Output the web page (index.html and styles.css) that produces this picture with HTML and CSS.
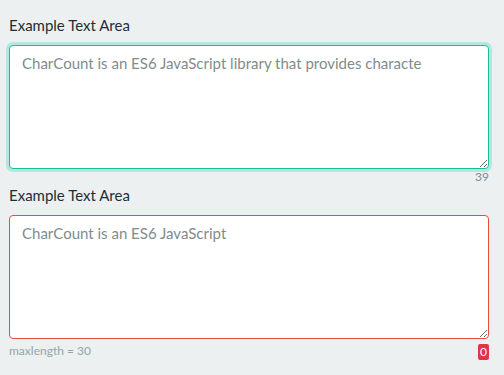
FILE: index.html
```html
<!DOCTYPE html>
<html>
<head>
    <link rel="stylesheet" href="styles.css">
</head>
<body>
    <!-- first field: still has room -->
    <div class="field">
        <label class="field-label" for="area1">Example Text Area</label>
        <textarea id="area1" class="text-area is-valid">CharCount is an ES6 JavaScript library that provides characte</textarea>
        <div class="field-foot">
            <span></span>
            <span class="count">39</span>
        </div>
    </div>

    <!-- second field: limit reached -->
    <div class="field">
        <label class="field-label" for="area2">Example Text Area</label>
        <textarea id="area2" class="text-area is-full" maxlength="30">CharCount is an ES6 JavaScript</textarea>
        <div class="field-foot foot-gap">
            <span class="hint">maxlength = 30</span>
            <span class="badge">0</span>
        </div>
    </div>
</body>
</html>
```

FILE: styles.css
```css
body {
    font-family: Lato, "Noto Sans", sans-serif;
    background-color: #ecf0f1;
    color: #222d38;
    margin: 0;
    padding: 15px 15px 0 9px;
}

.field {
    width: 480px;
}

.field-label {
    display: block;
    font-size: 15px;
    line-height: 21px;
    margin-bottom: 9px;
}

.text-area {
    display: block;
    box-sizing: border-box;
    width: 100%;
    height: 124px;
    margin: 0;
    padding: 8px 12px;
    font-family: Lato, "Noto Sans", sans-serif;
    font-size: 15px;
    line-height: 1.2;
    color: #7f8c8d;
    background: #fff;
    border: 1px solid #ccc;
    border-radius: 4px;
    outline: none;
}

/* focused field with room left */
.is-valid {
    border-color: #1abc9c;
    box-shadow: 0 0 0 3px #b3e8dc;
}

/* field at its limit */
.is-full {
    border-color: #e74c3c;
}

.field-foot {
    display: flex;
    justify-content: space-between;
    align-items: center;
    font-size: 12px;
    line-height: 16px;
}

.foot-gap {
    margin-top: 3px;
}

.count {
    color: #7f8c8d;
}

.hint {
    color: #95a5a6;
}

.badge {
    display: inline-block;
    padding: 0 2px;
    border-radius: 2px;
    background-color: #e0344a;
    color: #fff;
    margin-top: 2px;
}
```
